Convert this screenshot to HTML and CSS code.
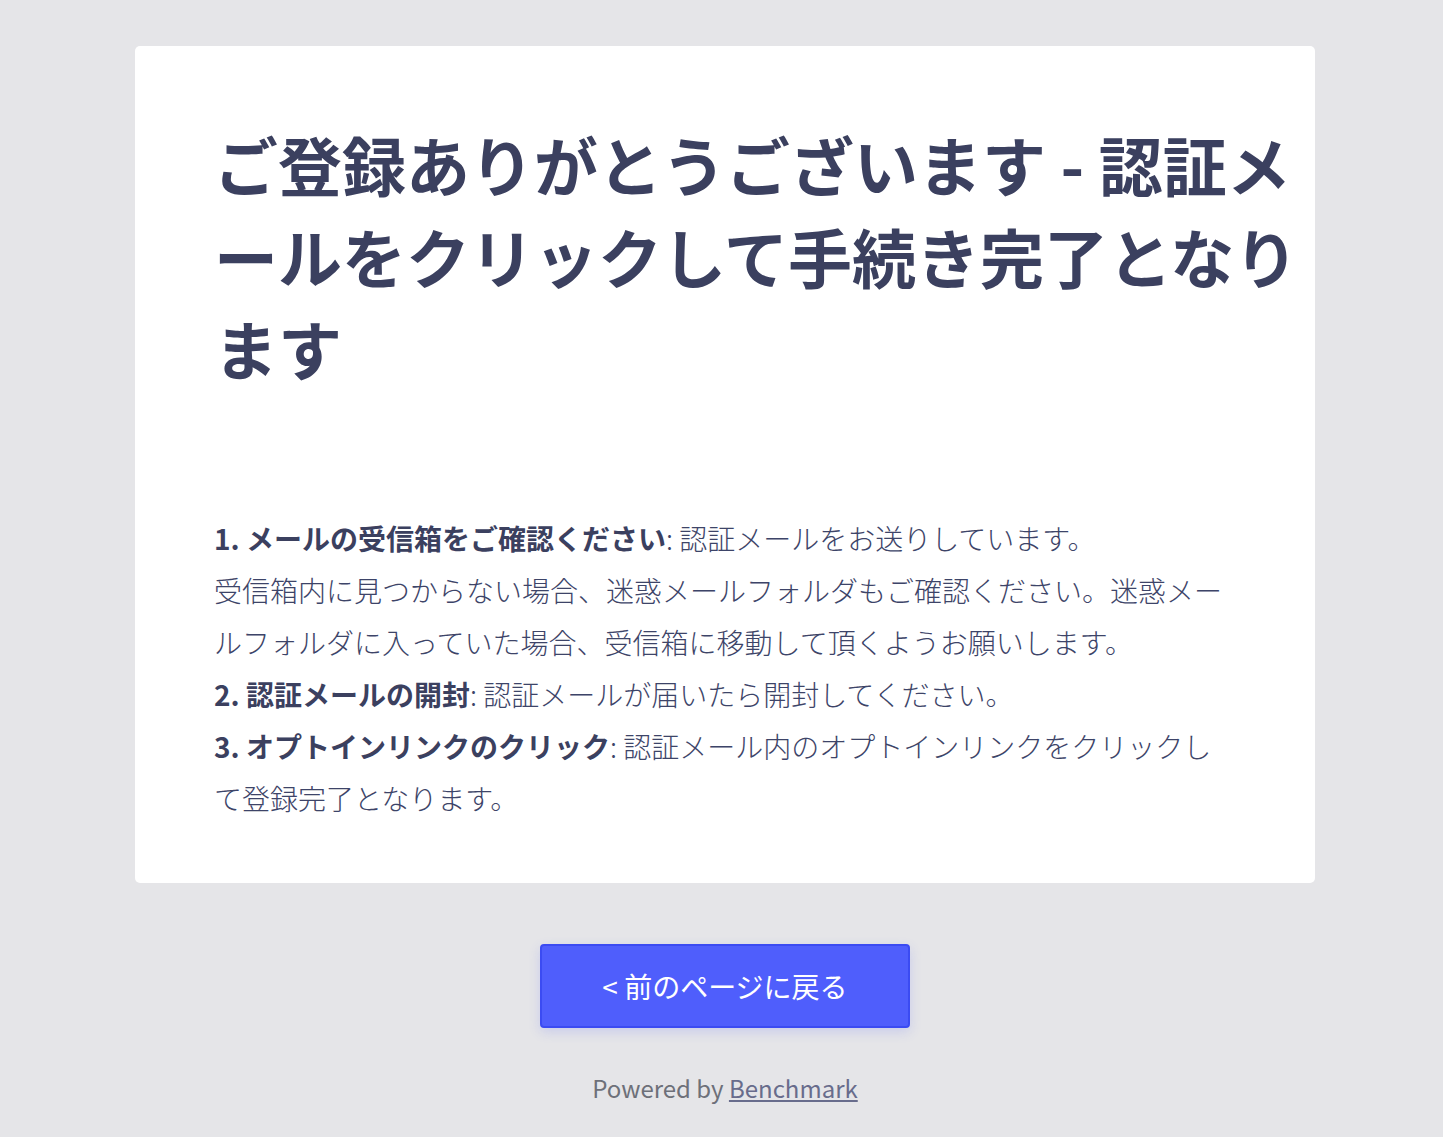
FILE: index.html
```html
<!DOCTYPE html>
<html lang="ja">
<head>
<meta charset="utf-8">
<title>ご登録ありがとうございます</title>
<link rel="stylesheet" href="styles.css">
</head>
<body>
<main class="page">
  <section class="card">
    <h1 class="title">ご登録ありがとうございます - 認証メールをクリックして手続き完了となります</h1>
    <div class="steps">
      <p class="step"><strong>1. メールの受信箱をご確認ください</strong>: 認証メールをお送りしています。<br>受信箱内に見つからない場合、迷惑メールフォルダもご確認ください。迷惑メールフォルダに入っていた場合、受信箱に移動して頂くようお願いします。</p>
      <p class="step"><strong>2. 認証メールの開封</strong>: 認証メールが届いたら開封してください。</p>
      <p class="step"><strong>3. オプトインリンクのクリック</strong>: 認証メール内のオプトインリンクをクリックして登録完了となります。</p>
    </div>
  </section>
  <a class="back-btn" href="#">&lt; 前のページに戻る</a>
  <p class="powered">Powered by <a class="powered-link" href="#">Benchmark</a></p>
</main>
</body>
</html>
```

FILE: styles.css
```css
html, body {
  margin: 0;
  padding: 0;
  background: #e5e5e8;
}

body {
  font-family: "Noto Sans CJK JP", "Noto Sans", sans-serif;
  color: #3c4163;
}

.page {
  display: flex;
  flex-direction: column;
  align-items: center;
  padding: 46px 0 0 7px;
}

.card {
  box-sizing: border-box;
  width: 1180px;
  background: #ffffff;
  border-radius: 5px;
  padding: 71px 0 59px 79px;
}

.title {
  margin: 0;
  font-size: 64px;
  line-height: 92px;
  font-weight: 700;
  color: #3b405f;
  width: 1101px;
}

.steps {
  margin-top: 119px;
  width: 1017px;
}

.step {
  margin: 0;
  font-size: 28px;
  line-height: 52px;
  font-weight: 300;
  color: #3d4468;
}

.step strong {
  font-weight: 700;
  color: #3b405f;
}

.back-btn {
  box-sizing: border-box;
  margin-top: 61px;
  width: 370px;
  height: 84px;
  display: flex;
  align-items: center;
  justify-content: center;
  background: #4f5efc;
  border: 2px solid #3b4bf2;
  border-radius: 4px;
  box-shadow: 0 4px 12px rgba(79, 94, 252, 0.18);
  color: #ffffff;
  font-size: 28px;
  font-weight: 400;
  text-decoration: none;
}

.powered {
  margin: 41px 0 0;
  font-size: 24px;
  line-height: 38px;
  font-weight: 400;
  color: #6d7079;
}

.powered-link {
  color: #686c8c;
  text-decoration: underline;
}
```
